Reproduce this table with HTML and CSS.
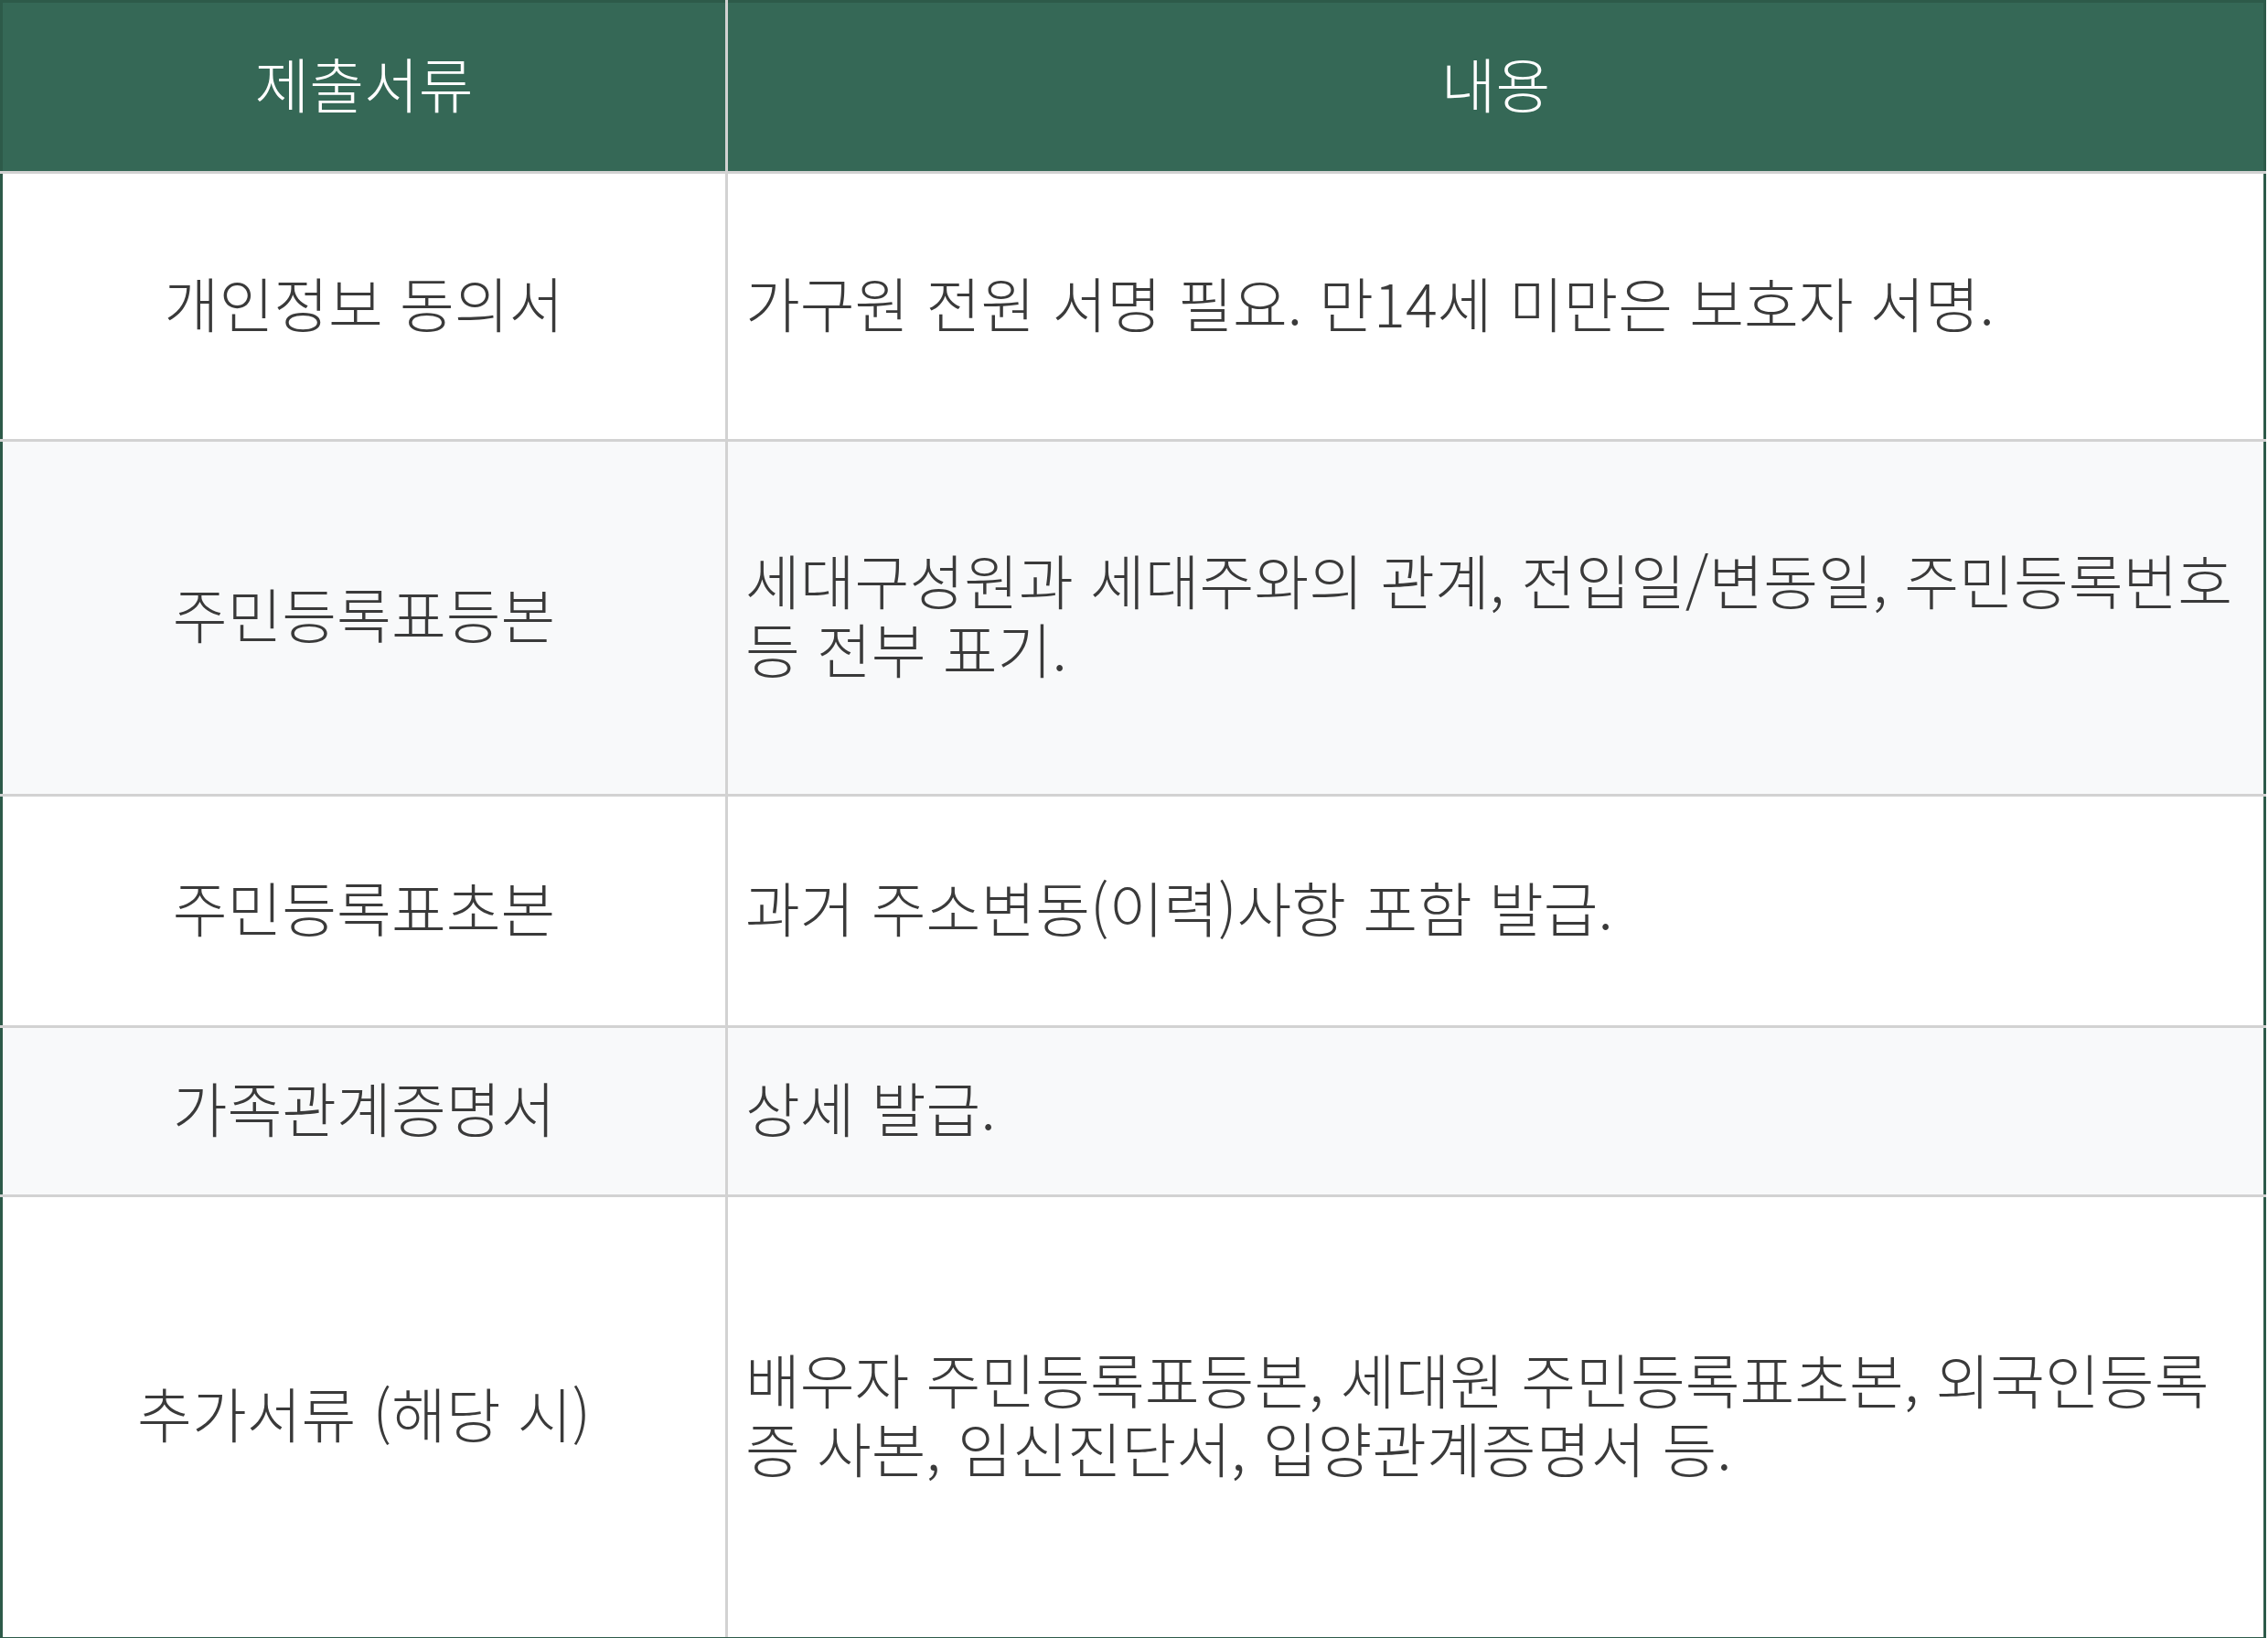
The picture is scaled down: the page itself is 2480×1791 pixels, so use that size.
FILE: index.html
```html
<!DOCTYPE html>
<html lang="ko">
<head>
<meta charset="utf-8">
<title>제출서류</title>
<link rel="stylesheet" href="styles.css">
</head>
<body>
<table class="docs">
  <colgroup>
    <col class="col-name">
    <col class="col-desc">
  </colgroup>
  <thead>
    <tr class="head-row">
      <th>제출서류</th>
      <th>내용</th>
    </tr>
  </thead>
  <tbody>
    <tr class="row r1">
      <td class="name">개인정보 동의서</td>
      <td class="desc">가구원 전원 서명 필요. 만14세 미만은 보호자 서명.</td>
    </tr>
    <tr class="row alt r2">
      <td class="name">주민등록표등본</td>
      <td class="desc">세대구성원과 세대주와의 관계, 전입일/변동일, 주민등록번호 등 전부 표기.</td>
    </tr>
    <tr class="row r3">
      <td class="name">주민등록표초본</td>
      <td class="desc">과거 주소변동(이력)사항 포함 발급.</td>
    </tr>
    <tr class="row alt r4">
      <td class="name">가족관계증명서</td>
      <td class="desc">상세 발급.</td>
    </tr>
    <tr class="row r5">
      <td class="name">추가서류 (해당 시)</td>
      <td class="desc">배우자 주민등록표등본, 세대원 주민등록표초본, 외국인등록증 사본, 임신진단서, 입양관계증명서 등.</td>
    </tr>
  </tbody>
</table>
</body>
</html>
```
FILE: styles.css
```css
html, body {
  margin: 0;
  padding: 0;
  background: #ffffff;
}

body {
  font-family: "Noto Sans CJK KR", "Noto Sans", sans-serif;
  color: #3a3a3a;
}

.docs {
  width: 2478px;
  border-collapse: collapse;
  border: 3px solid #2d5a49;
  table-layout: fixed;
  font-size: 65px;
  line-height: 1.14;
}

.col-name {
  width: 793px;
}

.docs th,
.docs td {
  border: 3px solid #d2d2d2;
  padding: 0 15px 10px 15px;
  font-weight: 300;
  vertical-align: middle;
}

.docs .desc {
  padding: 0 12px 10px 19px;
  text-align: left;
}

.head-row th {
  background: #356856;
  color: #ffffff;
  text-align: center;
  height: 174px;
  border-top-color: #2d5a49;
}

.head-row th:first-child,
.row td:first-child {
  border-left-color: #2d5a49;
}

.head-row th:last-child,
.row td:last-child {
  border-right-color: #2d5a49;
}

.row.r5 td {
  border-bottom-color: #2d5a49;
}

.row td {
  background: #ffffff;
}

.row.alt td {
  background: #f8f9fa;
}

.name {
  text-align: center;
}

.r1 td { height: 280px; }
.r2 td { height: 375px; }
.r3 td { height: 240px; }
.r4 td { height: 172px; }
.r5 td { height: 471px; }
```
